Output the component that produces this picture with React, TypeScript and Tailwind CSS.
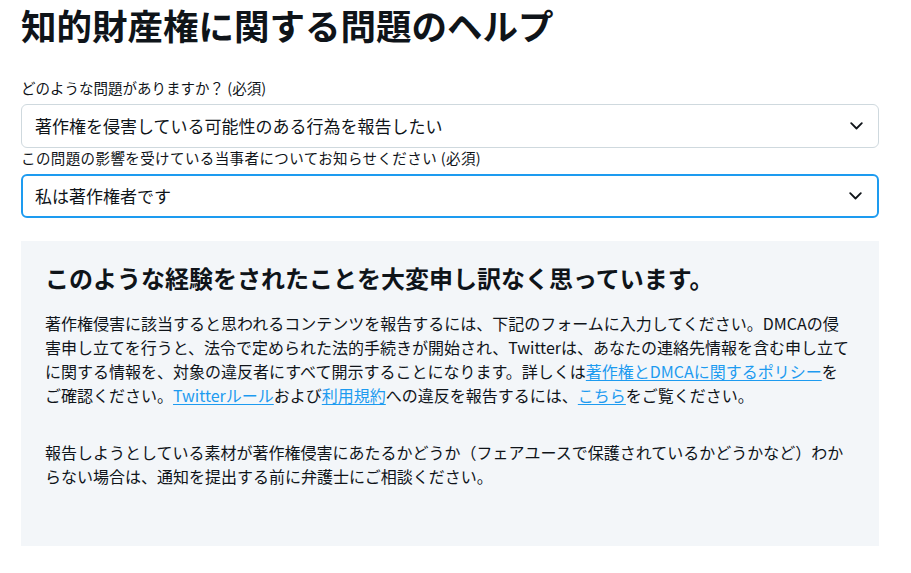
const jp = { fontFamily: '"Noto Sans CJK JP", "Noto Sans", sans-serif' };

const Chevron = () => (
  <svg width="13" height="8" viewBox="0 0 13 8" fill="none" className="text-[#0f1419]">
    <path d="M1.2 1.2 L6.5 6.5 L11.8 1.2" stroke="currentColor" strokeWidth="1.8" strokeLinecap="round" strokeLinejoin="round" />
  </svg>
);

const Select = ({ value, active }: { value: string; active?: boolean }) => (
  <div
    className={`flex items-center justify-between h-[44px] rounded-md bg-white pr-[15px] ${
      active ? "border-2 border-[#1d9bf0] pl-[12px]" : "border border-[#cfd9de] pl-[13px]"
    }`}
  >
    <span className="text-[17px] text-[#0f1419] leading-none">{value}</span>
    <Chevron />
  </div>
);

const A = ({ children }: { children: React.ReactNode }) => (
  <a href="#" className="text-[#1d9bf0] underline underline-offset-2">
    {children}
  </a>
);

export default function App() {
  return (
    <div className="w-[911px] h-[573px] bg-white overflow-hidden px-[21px] text-[#0f1419]" style={jp}>
      <h1 className="text-[35.5px] font-bold leading-none pt-[7px]">
        知的財産権に関する問題のヘルプ
      </h1>
      <div className="w-[858px]">
        <p className="mt-[35px] text-[14.5px] leading-[20px] mb-[6px]">どのような問題がありますか？ (必須)</p>
        <Select value="著作権を侵害している可能性のある行為を報告したい" />
        <p className="text-[14.5px] leading-[20px] mb-[6px] tracking-[0.4px]">
          この問題の影響を受けている当事者についてお知らせください (必須)
        </p>
        <Select value="私は著作権者です" active />
        <div className="mt-[23px] bg-[#f3f6f9] h-[305px] pl-[24px] pr-[28px] pt-[20px]">
          <h2 className="text-[24px] font-bold leading-[33px]">
            このような経験をされたことを大変申し訳なく思っています。
          </h2>
          <p className="mt-[17px] text-[16px] leading-[24px]">
            著作権侵害に該当すると思われるコンテンツを報告するには、下記のフォームに入力してください。DMCAの侵害申し立てを行うと、法令で定められた法的手続きが開始され、Twitterは、あなたの連絡先情報を含む申し立てに関する情報を、対象の違反者にすべて開示することになります。詳しくは
            <A>著作権とDMCAに関するポリシー</A>をご確認ください。<A>Twitterルール</A>および<A>利用規約</A>
            への違反を報告するには、<A>こちら</A>をご覧ください。
          </p>
          <p className="mt-[33px] text-[16px] leading-[24px]">
            報告しようとしている素材が著作権侵害にあたるかどうか（フェアユースで保護されているかどうかなど）わからない場合は、通知を提出する前に弁護士にご相談ください。
          </p>
        </div>
      </div>
    </div>
  );
}
